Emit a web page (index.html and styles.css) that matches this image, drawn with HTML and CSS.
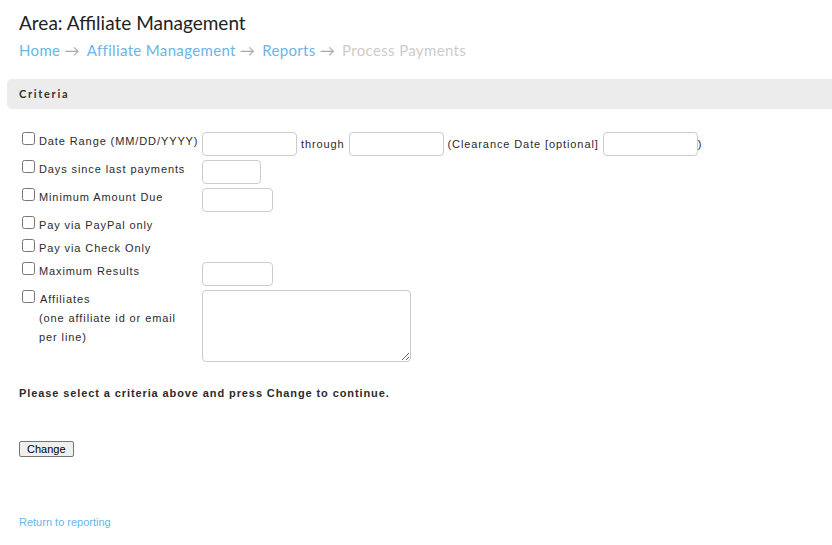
FILE: index.html
```html
<!DOCTYPE html>
<html lang="en">
<head>
  <meta charset="UTF-8">
  <meta name="viewport" content="width=device-width, initial-scale=1.0">
  <title>Process Payments</title>
  <link rel="stylesheet" href="styles.css">
</head>
<body>
  <div class="page">
    <div class="page-head">
      <h1>Area: Affiliate Management</h1>
      <div class="crumbs"><a href="#">Home</a><span class="arrow">&rarr;</span><a href="#">Affiliate Management</a><span class="arrow">&rarr;</span><a href="#">Reports</a><span class="arrow">&rarr;</span><span class="current">Process Payments</span></div>
    </div>

    <div class="panel-title">Criteria</div>

    <form class="criteria">
      <table class="form-table">
        <tr>
          <td class="lbl"><label><input type="checkbox"> Date Range (MM/DD/YYYY)</label></td>
          <td>
            <input type="text" class="fld date">
            <span class="txt">through</span>
            <input type="text" class="fld date">
            <span class="txt">(Clearance Date [optional]</span>
            <input type="text" class="fld date"><span class="txt">)</span>
          </td>
        </tr>
        <tr>
          <td class="lbl"><label><input type="checkbox"> Days since last payments</label></td>
          <td><input type="text" class="fld days"></td>
        </tr>
        <tr>
          <td class="lbl"><label><input type="checkbox"> Minimum Amount Due</label></td>
          <td><input type="text" class="fld amount"></td>
        </tr>
        <tr>
          <td class="lbl"><label><input type="checkbox"> Pay via PayPal only</label></td>
          <td></td>
        </tr>
        <tr>
          <td class="lbl"><label><input type="checkbox"> Pay via Check Only</label></td>
          <td></td>
        </tr>
        <tr>
          <td class="lbl"><label><input type="checkbox"> Maximum Results</label></td>
          <td><input type="text" class="fld amount"></td>
        </tr>
        <tr>
          <td class="lbl"><label><input type="checkbox"> <span class="aff">Affiliates</span><br>(one affiliate id or email<br>per line)</label></td>
          <td><textarea class="fld list"></textarea></td>
        </tr>
      </table>

      <p class="notice">Please select a criteria above and press Change to continue.</p>

      <button type="button" class="btn">Change</button>
    </form>

    <a href="#" class="back">Return to reporting</a>
  </div>
</body>
</html>
```

FILE: styles.css
```css
body {
  margin: 0;
  background: #fff;
  font-family: "Liberation Sans", Arial, sans-serif;
  color: #333;
  overflow-x: hidden;
}
.page {
  padding: 0 0 0 7px;
}
.page-head {
  padding: 11px 0 0 12px;
  font-family: Lato, sans-serif;
}
h1 {
  margin: 0;
  font-size: 19px;
  font-weight: normal;
  color: #222;
  line-height: 24px;
}
.crumbs {
  margin-top: 5px;
  font-size: 15px;
  line-height: 20px;
  letter-spacing: 0.35px;
}
.crumbs a {
  color: #6ab5ea;
  text-decoration: none;
}
.crumbs .arrow {
  color: #aaa;
  margin: 0 7px 0 4px;
}
.crumbs .current {
  color: #ccc;
}
.panel-title {
  margin: 19px -12px 0 0;
  height: 30px;
  line-height: 30px;
  padding-left: 12px;
  background: #ececec;
  border-radius: 5px;
  font-family: Lato, sans-serif;
  font-weight: bold;
  font-size: 11px;
  letter-spacing: 1.7px;
  color: #333;
}
.criteria {
  padding: 21px 0 0 9px;
}
.form-table {
  border-collapse: collapse;
}
.form-table td {
  padding: 2px;
  vertical-align: top;
  font-size: 11px;
  letter-spacing: 0.9px;
  white-space: nowrap;
  color: #2b2b2b;
}
.form-table td.lbl {
  padding-right: 17px;
}
.form-table label {
  display: block;
  box-sizing: border-box;
  width: 165px;
  line-height: 19px;
  padding-left: 21px;
}
.form-table input[type=checkbox] {
  margin: 0 0 0 -17px;
  width: 13px;
  height: 13px;
  vertical-align: top;
}
.aff {
  margin-left: 1px;
}
.fld {
  box-sizing: border-box;
  height: 24px;
  border: 1px solid #ccc;
  border-radius: 4px;
  padding: 2px 4px;
  vertical-align: top;
  margin: 0;
  font-size: 11px;
}
.date {
  width: 95px;
}
.days {
  width: 59px;
}
.amount {
  width: 71px;
}
.list {
  width: 209px;
  height: 72px;
}
.txt {
  display: inline-block;
  line-height: 24px;
}
.notice {
  margin: 23px 0 0 3px;
  font-size: 11px;
  font-weight: bold;
  letter-spacing: 0.9px;
  color: #2b2b2b;
}
.btn {
  margin: 42px 0 0 3px;
  font-family: "Liberation Sans", Arial, sans-serif;
  font-size: 11px;
  padding: 1px 7px;
  background: #efefef;
  border: 1px solid #767676;
  border-radius: 2px;
  color: #000;
}
.back {
  display: inline-block;
  margin: 59px 0 20px 12px;
  font-size: 11px;
  color: #6ab5ea;
  text-decoration: none;
}
```
